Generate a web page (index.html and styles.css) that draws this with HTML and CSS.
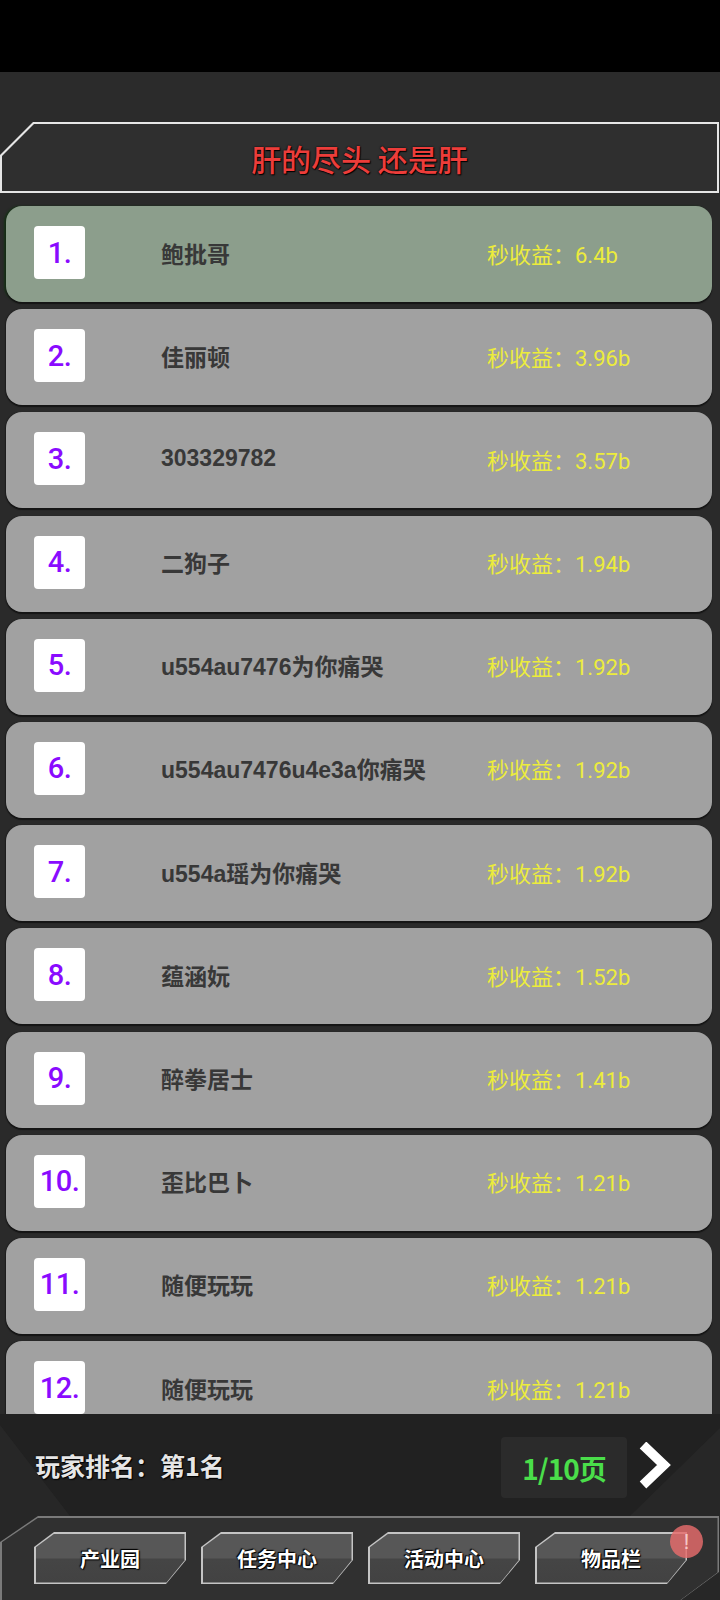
FILE: index.html
```html
<!DOCTYPE html>
<html lang="zh">
<head>
<meta charset="utf-8">
<link rel="stylesheet" href="styles.css">
</head>
<body>
<div class="app">
  <div class="statusbar"></div>
  <header class="header">
    <div class="title-frame">
      <div class="title-inner">
        <h1 class="title">肝的尽头 还是肝</h1>
      </div>
    </div>
  </header>
  <main class="list">
    <div class="row row-top"><div class="rank">1.</div><div class="name">鲍批哥</div><div class="value">秒收益：6.4b</div></div>
    <div class="row"><div class="rank">2.</div><div class="name">佳丽顿</div><div class="value">秒收益：3.96b</div></div>
    <div class="row"><div class="rank">3.</div><div class="name">303329782</div><div class="value">秒收益：3.57b</div></div>
    <div class="row"><div class="rank">4.</div><div class="name">二狗子</div><div class="value">秒收益：1.94b</div></div>
    <div class="row"><div class="rank">5.</div><div class="name">u554au7476为你痛哭</div><div class="value">秒收益：1.92b</div></div>
    <div class="row"><div class="rank">6.</div><div class="name">u554au7476u4e3a你痛哭</div><div class="value">秒收益：1.92b</div></div>
    <div class="row"><div class="rank">7.</div><div class="name">u554a瑶为你痛哭</div><div class="value">秒收益：1.92b</div></div>
    <div class="row"><div class="rank">8.</div><div class="name">蕴涵妧</div><div class="value">秒收益：1.52b</div></div>
    <div class="row"><div class="rank">9.</div><div class="name">醉拳居士</div><div class="value">秒收益：1.41b</div></div>
    <div class="row"><div class="rank">10.</div><div class="name">歪比巴卜</div><div class="value">秒收益：1.21b</div></div>
    <div class="row"><div class="rank">11.</div><div class="name">随便玩玩</div><div class="value">秒收益：1.21b</div></div>
    <div class="row"><div class="rank">12.</div><div class="name">随便玩玩</div><div class="value">秒收益：1.21b</div></div>
  </main>
  <footer class="footer">
    <div class="rank-row">
      <div class="player-rank">玩家排名：第1名</div>
      <div class="pager">
        <div class="page-box">1/10页</div>
        <svg class="chevron" width="32" height="48" viewBox="0 0 32 48">
          <polyline points="4,3 25,23 4,43" fill="none" stroke="#ffffff" stroke-width="9.5" stroke-linejoin="miter" stroke-miterlimit="10"/>
        </svg>
      </div>
    </div>
    <nav class="nav-frame">
      <div class="nav-inner">
        <div class="btn"><div class="btn-inner">产业园</div></div>
        <div class="btn"><div class="btn-inner">任务中心</div></div>
        <div class="btn"><div class="btn-inner">活动中心</div></div>
        <div class="btn btn-badged"><div class="btn-inner">物品栏</div><span class="badge">!</span></div>
      </div>
    </nav>
  </footer>
</div>
</body>
</html>
```
FILE: styles.css
```css
* { box-sizing: border-box; }
html, body { margin: 0; padding: 0; }
body {
  width: 720px;
  height: 1600px;
  overflow: hidden;
  background: #2a2a2a;
  font-family: "Noto Sans CJK SC", "Noto Sans", sans-serif;
}
.app {
  width: 720px;
  height: 1600px;
  display: flex;
  flex-direction: column;
}
.statusbar {
  height: 72px;
  background: #000;
  flex: none;
}
.header {
  height: 128px;
  flex: none;
  padding-top: 50px;
  background: #2b2b2b;
}
.title-frame {
  height: 71px;
  width: 719px;
  padding: 2px;
  background: #e6e6e6;
  clip-path: polygon(33px 0, 100% 0, 100% 100%, 0 100%, 0 33px);
}
.title-inner {
  height: 100%;
  background: #2f2f2f;
  clip-path: polygon(32px 0, 100% 0, 100% 100%, 0 100%, 0 32px);
  display: flex;
  align-items: center;
  justify-content: center;
}
.title {
  margin: 0;
  font-size: 30px;
  font-weight: 500;
  color: #ec3d3a;
  text-shadow: 0 0 2px #000, 1px 1px 1px #000;
}
.list {
  height: 1214px;
  flex: none;
  overflow: hidden;
  padding: 6px 8px 0 6px;
  background: #2a2a2a;
  display: flex;
  flex-direction: column;
  gap: 7.2px;
}
.row {
  flex: none;
  height: 96px;
  border-radius: 16px;
  background: #a1a1a1;
  box-shadow: 0 2px 1px #151515, -1px 0 1px #1e1e1e;
  display: grid;
  grid-template-columns: 51px 402px 1fr;
  align-items: center;
  padding-left: 28px;
}
.row-top {
  background: #8c9e8c;
  box-shadow: 0 2px 1px #151515, -2px 0 2px #163016;
}
.rank {
  width: 51px;
  height: 53px;
  margin-top: -3px;
  background: #fff;
  border-radius: 4px;
  display: flex;
  align-items: center;
  justify-content: center;
  font-family: Roboto, "Liberation Sans", sans-serif;
  font-size: 29px;
  font-weight: 500;
  color: #8a0bff;
  letter-spacing: -0.5px;
}
.name {
  padding-left: 76px;
  margin-top: -3px;
  font-family: "Liberation Sans", "Noto Sans CJK SC", sans-serif;
  font-size: 23px;
  font-weight: 700;
  color: #383838;
  white-space: nowrap;
}
.value {
  margin-top: -3px;
  font-family: Roboto, "Noto Sans CJK SC", sans-serif;
  font-size: 22px;
  color: #ecec3c;
  white-space: nowrap;
}
.footer {
  flex: 1;
  display: flex;
  flex-direction: column;
  background: #272727;
}
.rank-row {
  height: 102px;
  flex: none;
  display: flex;
  align-items: center;
  justify-content: space-between;
  padding: 0 49px 0 35px;
  background: #212121;
  clip-path: polygon(0 0, 100% 0, 100% 14px, 630px 100%, 70px 100%, 0 11px);
}
.player-rank {
  font-size: 25px;
  font-weight: 700;
  color: #e6e6e6;
  text-shadow: 0 0 2px #000, 1px 1px 1px #000;
}
.pager {
  display: flex;
  align-items: center;
  gap: 12px;
}
.page-box {
  width: 126px;
  height: 61px;
  margin-top: 5px;
  border-radius: 4px;
  background: #2b2b2b;
  display: flex;
  align-items: center;
  justify-content: center;
  font-size: 28px;
  font-weight: 700;
  color: #4ade4a;
  letter-spacing: -1px;
}
.chevron { display: block; margin-top: 2px; }
.nav-frame {
  flex: 1;
  width: 719px;
  padding: 1.5px 1.5px 0 1.5px;
  background: #7a7a7a;
  clip-path: polygon(38px 0, 100% 0, 100% 56px, 681px 100%, 0 100%, 0 26px);
}
.nav-inner {
  height: 100%;
  background: #303030;
  clip-path: polygon(37px 0, 100% 0, 100% 55px, 679px 100%, 0 100%, 0 25px);
  display: flex;
  gap: 15px;
  padding: 14.5px 0 0 32.5px;
}
.btn {
  position: relative;
  width: 152px;
  height: 52px;
  padding: 1.5px;
  background: #c4c4c4;
  clip-path: polygon(20px 0, 100% 0, 100% 28px, 132px 100%, 0 100%, 0 15px);
}
.btn-inner {
  height: 100%;
  background: linear-gradient(#575757 0, #575757 48%, #454545 52%, #424242 100%);
  clip-path: polygon(19px 0, 100% 0, 100% 27px, 131px 100%, 0 100%, 0 14px);
  display: flex;
  align-items: center;
  justify-content: center;
  font-size: 20px;
  font-weight: 700;
  color: #fff;
  text-shadow: 0 0 2px #000, 1px 1px 1px #000, -1px -1px 1px #000;
}
.btn-badged {
  clip-path: none;
  background: none;
  padding: 0;
}
.btn-badged::before {
  content: "";
  position: absolute;
  inset: 0;
  background: #c4c4c4;
  clip-path: polygon(20px 0, 100% 0, 100% 28px, 132px 100%, 0 100%, 0 15px);
}
.btn-badged .btn-inner {
  position: relative;
  margin: 1.5px;
  height: calc(100% - 3px);
}
.badge {
  position: absolute;
  top: -7px;
  right: -16px;
  width: 33px;
  height: 33px;
  border-radius: 50%;
  background: rgba(232, 108, 108, 0.82);
  color: #f4c8c8;
  font-family: "Liberation Sans", sans-serif;
  font-size: 22px;
  line-height: 33px;
  text-align: center;
}
```
